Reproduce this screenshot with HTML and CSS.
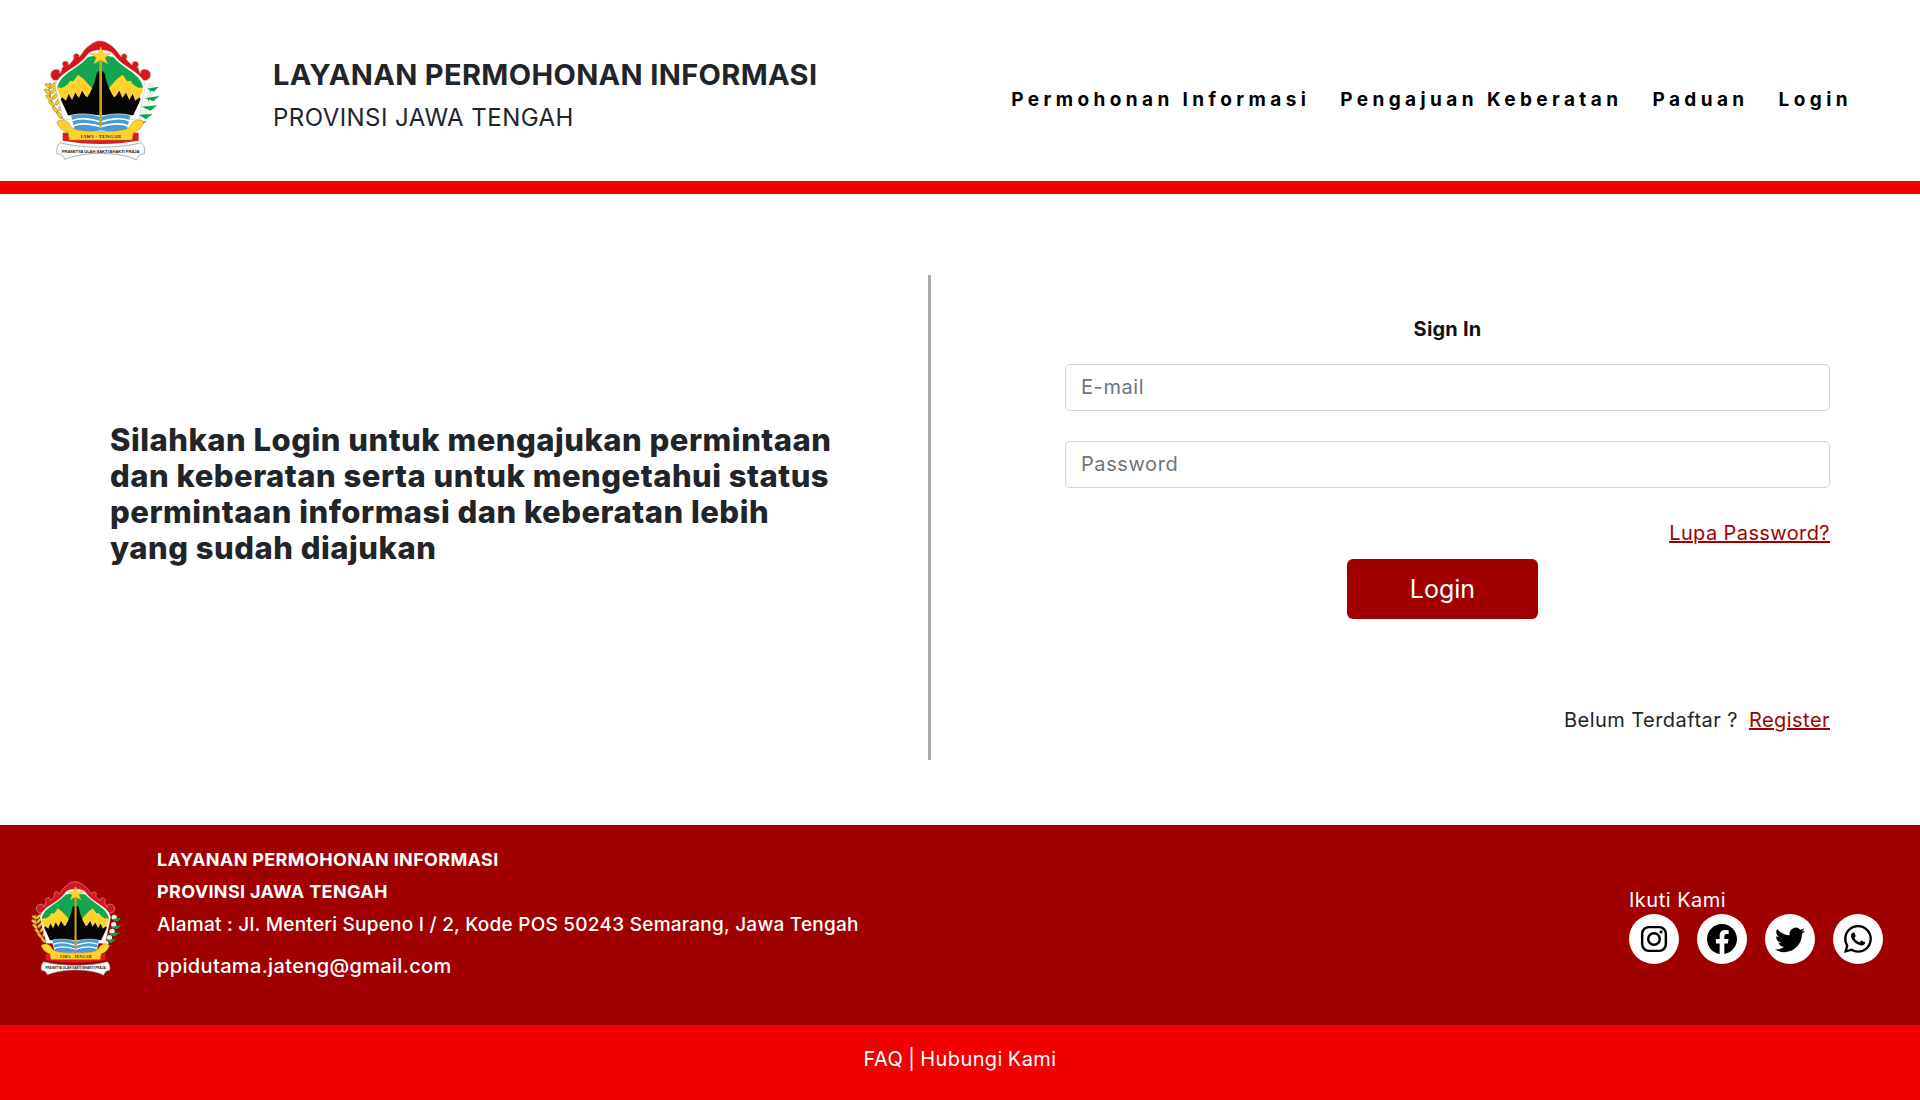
FILE: index.html
```html
<!DOCTYPE html>
<html lang="id">
<head>
<meta charset="utf-8">
<title>Layanan Permohonan Informasi</title>
<link rel="stylesheet" href="styles.css">
</head>
<body>
<svg class="defs" width="0" height="0" aria-hidden="true">
  <defs>
    <symbol id="emblem" viewBox="0 0 375 390">
      <!-- wheat -->
      <g fill="#f6c92f" stroke="#8a7a25" stroke-width="1.5">
        <path d="M30 140 C22 180 40 225 72 250" fill="none" stroke="#b59a22" stroke-width="5"/>
        <ellipse cx="26" cy="150" rx="12" ry="5" transform="rotate(25 26 150)"/>
        <ellipse cx="40" cy="148" rx="12" ry="5" transform="rotate(-40 40 148)"/>
        <ellipse cx="23" cy="167" rx="12" ry="5" transform="rotate(35 23 167)"/>
        <ellipse cx="41" cy="164" rx="12" ry="5" transform="rotate(-45 41 164)"/>
        <ellipse cx="27" cy="185" rx="12" ry="5" transform="rotate(40 27 185)"/>
        <ellipse cx="46" cy="180" rx="12" ry="5" transform="rotate(-50 46 180)"/>
        <ellipse cx="35" cy="203" rx="12" ry="5" transform="rotate(45 35 203)"/>
        <ellipse cx="54" cy="197" rx="12" ry="5" transform="rotate(-55 54 197)"/>
        <ellipse cx="45" cy="220" rx="12" ry="5" transform="rotate(50 45 220)"/>
        <ellipse cx="63" cy="214" rx="12" ry="5" transform="rotate(-60 63 214)"/>
        <ellipse cx="58" cy="237" rx="12" ry="5" transform="rotate(55 58 237)"/>
      </g>
      <!-- cotton -->
      <g>
        <path d="M333 150 C330 190 315 235 290 258" fill="none" stroke="#1c9a55" stroke-width="3"/>
        <circle cx="330" cy="150" r="10" fill="#eeeee6"/>
        <path d="M320 158 L356 152 L342 167 Z" fill="#0fa155"/>
        <circle cx="328" cy="178" r="10" fill="#eeeee6"/>
        <path d="M314 187 L358 180 L340 196 Z" fill="#0fa155"/>
        <circle cx="322" cy="204" r="10" fill="#eeeee6"/>
        <path d="M304 212 L352 208 L332 224 Z" fill="#0fa155"/>
        <circle cx="312" cy="228" r="10" fill="#eeeee6"/>
        <path d="M296 236 L338 234 L318 250 Z" fill="#0fa155"/>
        <circle cx="298" cy="250" r="10" fill="#eeeee6"/>
        <path d="M282 256 L320 256 L300 270 Z" fill="#0fa155"/>
      </g>
      <!-- shield frame -->
      <path d="M40 132 C26 122 30 100 50 100 C58 100 62 108 60 112 C66 104 64 96 70 90 C62 84 70 72 80 76 C86 78 86 84 86 86 C92 82 98 74 102 66 C96 58 106 48 114 54 C118 56 118 60 118 62 C126 54 134 36 146 30 C158 20 168 14 180 14 C194 14 206 22 216 30 C228 38 236 54 244 62 C244 56 250 50 256 54 C264 58 262 66 258 68 C264 76 270 82 276 86 C276 78 282 74 288 76 C298 80 298 90 292 92 C298 98 296 106 302 112 C300 104 306 98 316 100 C334 102 338 124 322 132 C312 136 300 132 300 130 L62 130 C60 132 50 136 40 132 Z" fill="#d8141c" stroke="#c9c9c9" stroke-width="2"/>
      <path d="M46 150 C54 108 114 98 144 54 C158 38 206 38 220 54 C250 98 310 108 316 150 L296 250 L70 250 Z" fill="#fff" stroke="#bbb" stroke-width="1.5"/>
      <path d="M52 156 C60 112 110 102 144 63 L182 56 L220 63 C254 102 302 112 310 156 L290 190 L72 190 Z" fill="#12a650"/>
      <!-- yellow mountains -->
      <path d="M52 154 C66 158 80 152 90 134 L100 136 L114 116 L130 128 C142 140 154 156 170 172 L170 200 L76 206 C64 190 54 172 52 154 Z" fill="#ffd22e"/>
      <path d="M310 154 C296 158 282 152 272 134 L262 136 L248 116 L232 128 C220 140 208 156 192 172 L192 200 L286 206 C298 190 308 172 310 154 Z" fill="#ffd22e"/>
      <!-- black -->
      <path d="M170 112 L176 106 L188 106 L194 112 C197 132 206 160 222 184 L228 180 L238 164 L247 186 L258 170 L268 192 L278 174 L286 194 L298 184 L302 190 L280 238 L84 238 L62 190 L66 184 L78 194 L86 174 L96 192 L106 170 L117 186 L126 164 L136 180 L142 184 C158 160 167 132 170 112 Z" fill="#050505"/>
      <!-- water -->
      <path d="M92 238 C116 232 154 232 182 242 C210 232 248 232 272 238 L262 280 C236 290 208 288 182 284 C156 288 128 290 102 280 Z" fill="#4a9ad6" stroke="#fff" stroke-width="2"/>
      <path d="M96 254 C118 244 154 248 182 258 C210 248 246 244 268 254" fill="none" stroke="#fff" stroke-width="5"/>
      <path d="M100 270 C120 260 154 264 182 272 C210 264 244 260 264 270" fill="none" stroke="#fff" stroke-width="5"/>
      <!-- pole and star -->
      <rect x="178" y="70" width="8" height="202" fill="#caa320"/>
      <polygon points="182,32 190,52 214,52 195,65 203,84 182,72 161,84 169,65 150,52 174,52" fill="#ffd22e" stroke="#d9b12b" stroke-width="1"/>
      <!-- bottom shield -->
      <path d="M68 290 L296 290 L296 314 C260 320 220 324 182 324 C144 324 104 320 68 314 Z" fill="#de1a22"/>
      <path d="M52 262 C48 254 62 250 76 254 C90 258 90 272 100 278 C128 290 234 290 262 278 C272 272 272 258 286 254 C300 250 314 254 310 262 C306 274 296 286 280 290 L276 312 L88 312 L84 290 C68 286 56 274 52 262 Z" fill="#ffd22e" stroke="#a68a14" stroke-width="1.5"/>
      <text class="emblem-band" x="182" y="307" text-anchor="middle">JAWA - TENGAH</text>
      <!-- ribbon -->
      <path d="M60 320 C50 330 48 344 52 354 C62 354 70 358 74 370 L92 364 C150 348 214 348 272 364 L290 372 C294 358 302 354 312 354 C316 344 314 330 304 320 C240 338 124 338 60 320 Z" fill="#f7f8fa" stroke="#8b8b8b" stroke-width="2"/>
      <text class="emblem-motto" x="182" y="350" text-anchor="middle">PRASETYA ULAH SAKTI BHAKTI PRAJA</text>
    </symbol>
  </defs>
</svg>

<header class="site-header">
  <div class="brand">
    <svg class="brand-logo" role="img" aria-label="Lambang Jawa Tengah"><use href="#emblem"/></svg>
    <div class="brand-text">
      <div class="brand-title">LAYANAN PERMOHONAN INFORMASI</div>
      <div class="brand-sub">PROVINSI JAWA TENGAH</div>
    </div>
  </div>
  <nav class="nav">
    <a href="#">Permohonan Informasi</a>
    <a href="#">Pengajuan Keberatan</a>
    <a href="#">Paduan</a>
    <a href="#">Login</a>
  </nav>
</header>

<main class="main">
  <section class="intro">
    <h1>Silahkan Login untuk mengajukan permintaan dan keberatan serta untuk mengetahui status permintaan informasi dan keberatan lebih yang sudah diajukan</h1>
  </section>
  <section class="signin">
    <h2>Sign In</h2>
    <input class="field" type="email" placeholder="E-mail">
    <input class="field" type="password" placeholder="Password">
    <a class="forgot" href="#">Lupa Password?</a>
    <button class="btn" type="button">Login</button>
    <p class="register">Belum Terdaftar ? <a href="#">Register</a></p>
  </section>
</main>

<footer class="footer">
  <svg class="footer-logo" role="img" aria-label="Lambang Jawa Tengah"><use href="#emblem"/></svg>
  <div class="footer-info">
    <div class="footer-strong">LAYANAN PERMOHONAN INFORMASI</div>
    <div class="footer-strong">PROVINSI JAWA TENGAH</div>
    <div class="footer-line">Alamat : Jl. Menteri Supeno I / 2, Kode POS 50243 Semarang, Jawa Tengah</div>
    <div class="footer-line footer-mail">ppidutama.jateng@gmail.com</div>
  </div>
  <div class="social">
    <div class="social-title">Ikuti Kami</div>
    <div class="social-icons">
      <a class="social-btn" href="#" aria-label="Instagram">
        <svg class="icon-sm" viewBox="0 0 30 30" fill="none" stroke="#000" stroke-width="2.6"><rect x="2.3" y="2.3" width="25.4" height="25.4" rx="7"/><circle cx="15" cy="15" r="6.2"/><circle cx="22.6" cy="7.4" r="1.7" fill="#000" stroke="none"/></svg>
      </a>
      <a class="social-btn" href="#" aria-label="Facebook">
        <svg viewBox="0 0 16 16" fill="#000"><path d="M16 8.049c0-4.446-3.582-8.05-8-8.05C3.58 0-.002 3.603-.002 8.05c0 4.017 2.926 7.347 6.75 7.951v-5.625h-2.03V8.05H6.75V6.275c0-2.017 1.195-3.131 3.022-3.131.876 0 1.791.157 1.791.157v1.98h-1.009c-.993 0-1.303.621-1.303 1.258v1.51h2.218l-.354 2.326H9.25V16c3.824-.604 6.75-3.934 6.75-7.951z"/></svg>
      </a>
      <a class="social-btn" href="#" aria-label="Twitter">
        <svg viewBox="0 0 16 16" fill="#000"><path d="M5.026 15c6.038 0 9.341-5.003 9.341-9.334 0-.14 0-.282-.006-.422A6.685 6.685 0 0 0 16 3.542a6.658 6.658 0 0 1-1.889.518 3.301 3.301 0 0 0 1.447-1.817 6.533 6.533 0 0 1-2.087.793A3.286 3.286 0 0 0 7.875 6.03a9.325 9.325 0 0 1-6.767-3.429 3.289 3.289 0 0 0 1.018 4.382A3.323 3.323 0 0 1 .64 6.575v.045a3.288 3.288 0 0 0 2.632 3.218 3.203 3.203 0 0 1-.865.115 3.23 3.23 0 0 1-.614-.057 3.283 3.283 0 0 0 3.067 2.277A6.588 6.588 0 0 1 .78 13.58a6.32 6.32 0 0 1-.78-.045A9.344 9.344 0 0 0 5.026 15z"/></svg>
      </a>
      <a class="social-btn" href="#" aria-label="WhatsApp">
        <svg class="icon-sm" viewBox="0 0 16 16" fill="#000"><path d="M13.601 2.326A7.854 7.854 0 0 0 7.994 0C3.627 0 .068 3.558.064 7.926c0 1.399.366 2.76 1.057 3.965L0 16l4.204-1.102a7.933 7.933 0 0 0 3.79.965h.004c4.368 0 7.926-3.558 7.93-7.93A7.898 7.898 0 0 0 13.6 2.326zM7.994 14.521a6.573 6.573 0 0 1-3.356-.92l-.24-.144-2.494.654.666-2.433-.156-.251a6.56 6.56 0 0 1-1.007-3.505c0-3.626 2.957-6.584 6.591-6.584a6.56 6.56 0 0 1 4.66 1.931 6.557 6.557 0 0 1 1.928 4.66c-.004 3.639-2.961 6.592-6.592 6.592zm3.615-4.934c-.197-.099-1.17-.578-1.353-.646-.182-.065-.315-.099-.445.099-.133.197-.513.646-.627.775-.114.133-.232.148-.43.05-.197-.1-.836-.308-1.592-.985-.59-.525-.985-1.175-1.103-1.372-.114-.198-.011-.304.088-.403.087-.088.197-.232.296-.346.1-.114.133-.198.198-.33.065-.134.034-.248-.015-.347-.05-.099-.445-1.076-.612-1.47-.16-.389-.323-.335-.445-.34-.114-.007-.247-.007-.38-.007a.729.729 0 0 0-.529.247c-.182.198-.691.677-.691 1.654 0 .977.71 1.916.81 2.049.098.133 1.394 2.132 3.383 2.992.47.205.84.326 1.129.418.475.152.904.129 1.246.08.38-.058 1.171-.48 1.338-.943.164-.464.164-.86.114-.943-.049-.084-.182-.133-.38-.232z"/></svg>
      </a>
    </div>
  </div>
</footer>

<div class="subfooter"><a href="#">FAQ</a> | <a href="#">Hubungi Kami</a></div>
</body>
</html>
```

FILE: styles.css
```css
* { box-sizing: border-box; }
html, body { margin: 0; padding: 0; }
body {
  font-family: Inter, "Liberation Sans", sans-serif;
  color: #212529;
  background: #fff;
  height: 1100px;
  overflow: hidden;
}
a { color: inherit; }
.defs { position: absolute; }
.emblem-band { font: 700 14px "Liberation Serif", serif; fill: #222; letter-spacing: 1px; }
.emblem-motto { font: 700 12px "Liberation Sans", sans-serif; fill: #222; }

.site-header {
  height: 194px;
  border-bottom: 13px solid #f00000;
  display: flex;
  align-items: center;
  justify-content: space-between;
  padding: 0 68px 0 40px;
}
.brand { display: flex; align-items: center; gap: 108px; }
.brand-logo { width: 125px; height: 130px; margin-top: 21px; }
.brand-title { font-size: 29px; font-weight: 700; line-height: 44px; letter-spacing: .35px; }
.brand-sub { font-size: 24px; font-weight: 400; line-height: 42px; letter-spacing: .45px; }
.brand-text { margin-top: 11px; }
.nav { display: flex; gap: 30px; margin-top: 17px; }
.nav a {
  color: #000;
  font-size: 19px;
  font-weight: 700;
  letter-spacing: 4.4px;
  text-decoration: none;
}

.main { height: 631px; display: flex; padding-top: 81px; }
.intro {
  width: 931px;
  height: 485px;
  border-right: 3px solid #aaa;
  padding: 0 89px 48px 110px;
  display: flex;
  align-items: center;
}
.intro h1 { margin: 0; font-size: 31px; font-weight: 800; line-height: 36px; letter-spacing: .5px; }
.signin {
  margin-left: 134px;
  width: 765px;
  display: flex;
  flex-direction: column;
  padding-top: 40px;
}
.signin h2 { margin: 0 0 21px; font-size: 20px; font-weight: 700; line-height: 28px; text-align: center; color: #111; letter-spacing: .2px; }
.field {
  display: block;
  width: 100%;
  height: 47px;
  margin-bottom: 30px;
  padding: 0 15px 2px;
  border: 1px solid #ced4da;
  border-radius: 5px;
  font: 400 20px Inter, sans-serif;
  letter-spacing: .6px;
}
.field::placeholder { color: #6c757d; opacity: 1; }
.forgot {
  align-self: flex-end;
  color: #a00000;
  font-size: 20px;
  line-height: 28px;
  margin-top: 1px;
  letter-spacing: .4px;
}
.btn {
  align-self: center;
  width: 191px;
  height: 60px;
  margin: 12px 10px 0 0;
  border: 0;
  border-radius: 6px;
  background: #a00000;
  color: #fff;
  font: 400 25px Inter, sans-serif;
}
.register { margin: 87px 0 0; font-size: 20px; line-height: 28px; text-align: right; letter-spacing: .45px; }
.register a { color: #a00000; margin-left: 5px; }

.footer {
  height: 200px;
  background: #a00000;
  color: #fff;
  display: flex;
  align-items: center;
  padding: 0 37px 0 28px;
}
.footer-logo { width: 98px; height: 102px; flex: none; margin-top: 8px; }
.footer-info { margin-left: 31px; flex: 1; margin-top: -23px; }
.footer-strong { font-size: 18px; font-weight: 700; line-height: 32px; letter-spacing: .35px; }
.footer-line { font-size: 19px; font-weight: 500; line-height: 33px; letter-spacing: .25px; }
.footer-mail { margin-top: 9px; font-size: 20px; letter-spacing: .35px; }
.social { margin-top: 0; }
.social-title { font-size: 20px; line-height: 28px; letter-spacing: .5px; }
.social-icons { display: flex; gap: 18px; }
.social-btn {
  width: 50px;
  height: 50px;
  border-radius: 50%;
  background: #fff;
  display: flex;
  align-items: center;
  justify-content: center;
}
.social-btn svg { width: 30px; height: 30px; }
.social-btn .icon-sm { width: 28px; height: 28px; }

.subfooter {
  height: 75px;
  background: #f00000;
  color: #fff;
  font-size: 20px;
  text-align: center;
  line-height: 68px;
  letter-spacing: .4px;
  word-spacing: -1px;
}
.subfooter a { text-decoration: none; }
```
